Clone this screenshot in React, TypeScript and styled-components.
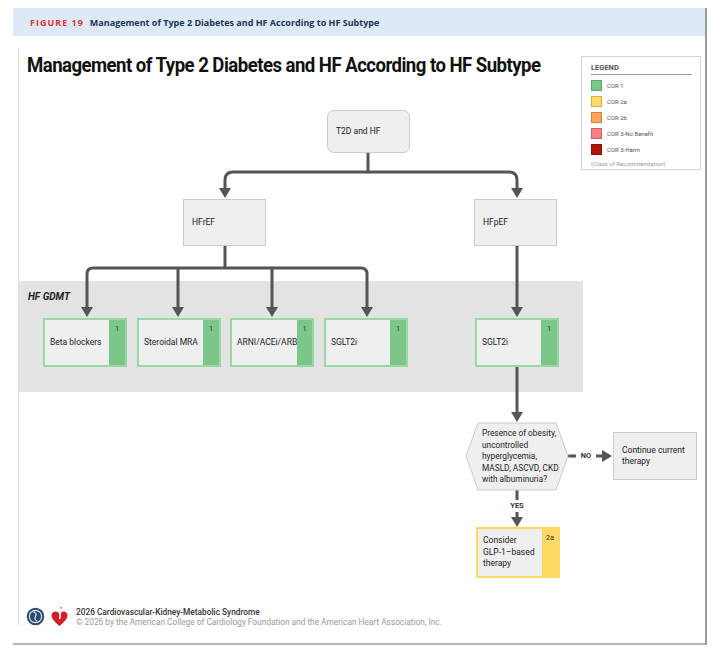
import React from "react";
import styled, { createGlobalStyle } from "styled-components";

const Global = createGlobalStyle`
  body { margin: 0; background: #fff; font-family: Roboto, "Liberation Sans", sans-serif; }
`;

const OX = 13;
const OY = 36;

const Frame = styled.div`
  margin: 8px 0 0 13px;
  width: 692px;
  border-right: 2px solid #9a9a9a;
`;
const Banner = styled.div`
  height: 28px;
  background: #dde9f6;
  display: flex;
  align-items: center;
  gap: 6px;
  padding-left: 17px;
  font-family: "Open Sans", sans-serif;
  font-size: 9px;
  font-weight: 700;
  color: #1d3557;
`;
const Fig = styled.span`
  color: #e03131;
  letter-spacing: 1px;
`;
const Body = styled.div`
  position: relative;
  height: 607px;
  border-bottom: 2px solid #b5b5b5;
  display: flex;
  flex-direction: column;
  &::before {
    content: "";
    position: absolute;
    left: 5px;
    top: 12px;
    height: 577px;
    border-left: 1px solid #dcdcdc;
  }
`;
const Title = styled.h1`
  margin: 17px 0 0 14px;
  font-family: Roboto, sans-serif;
  font-weight: 700;
  font-size: 21px;
  letter-spacing: -0.6px;
  color: #111;
  transform: scaleX(0.885);
  transform-origin: left;
`;
const Abs = styled.div<{ $x: number; $y: number; $w: number; $h: number }>`
  position: absolute;
  left: ${(p) => p.$x - OX}px;
  top: ${(p) => p.$y - OY}px;
  width: ${(p) => p.$w}px;
  height: ${(p) => p.$h}px;
  box-sizing: border-box;
`;
const Band = styled(Abs)`
  background: #e3e3e4;
`;
const BandLabel = styled(Abs)`
  font-size: 10px;
  font-weight: 700;
  font-style: italic;
  color: #222;
`;
const Node = styled(Abs)<{ $round?: boolean }>`
  background: #efefef;
  border: 1px solid #cbcbcb;
  border-radius: ${(p) => (p.$round ? "7px" : "0")};
  display: flex;
  align-items: center;
  padding-left: 8px;
  font-size: 8.5px;
  color: #222;
  line-height: 1.35;
`;
const CorNode = styled(Abs)<{ $c: string; $b: string }>`
  background: #efefef;
  border: 2px solid ${(p) => p.$b};
  display: flex;
  font-size: 8.5px;
  color: #222;
  line-height: 1.35;
`;
const CorText = styled.div`
  flex: 1;
  display: flex;
  align-items: center;
  padding-left: 5px;
`;
const CorStrip = styled.div<{ $c: string }>`
  width: 16px;
  background: ${(p) => p.$c};
  font-size: 7.5px;
  text-align: center;
  padding-top: 4px;
  color: #333;
`;
const HexText = styled(Abs)`
  font-size: 8.3px;
  line-height: 1.38;
  color: #222;
  display: flex;
  align-items: center;
`;
const Label = styled(Abs)`
  font-size: 7.5px;
  font-weight: 700;
  color: #333;
  text-align: center;
`;
const Legend = styled(Abs)`
  border: 1px solid #d5d5d5;
  background: #fff;
  padding: 6px 8px 0 9px;
  display: flex;
  flex-direction: column;
  gap: 5px;
`;
const LegendHead = styled.div`
  font-size: 7.5px;
  font-weight: 700;
  color: #555;
  border-bottom: 1px solid #999;
  padding-bottom: 2px;
  margin-bottom: 0;
`;
const LegendRow = styled.div`
  display: flex;
  align-items: center;
  gap: 5px;
  font-size: 6px;
  color: #555;
`;
const Swatch = styled.span<{ $c: string; $b: string }>`
  width: 11px;
  height: 11px;
  background: ${(p) => p.$c};
  border: 1px solid ${(p) => p.$b};
  box-sizing: border-box;
`;
const LegendNote = styled.div`
  font-size: 6px;
  color: #999;
`;
const Lines = styled.svg`
  position: absolute;
  left: 0;
  top: 0;
`;
const Footer = styled.div`
  margin-top: auto;
  display: flex;
  align-items: center;
  gap: 6px;
  padding: 0 0 16px 13px;
`;
const FootText = styled.div`
  display: flex;
  flex-direction: column;
  margin-left: 2px;
`;
const FootTitle = styled.div`
  font-size: 8.3px;
  font-weight: 500;
  color: #333;
`;
const FootCopy = styled.div`
  font-size: 8.3px;
  color: #999;
`;

const G = "#555";
const Arrow = ({ x, y }: { x: number; y: number }) => (
  <polygon points={`${x - 6},${y - 10} ${x + 6},${y - 10} ${x},${y}`} fill={G} />
);
const ArrowR = ({ x, y }: { x: number; y: number }) => (
  <polygon points={`${x - 10},${y - 6} ${x - 10},${y + 6} ${x},${y}`} fill={G} />
);

const green = { c: "#7dc68a", b: "#9ad7a4" };
const yellow = { c: "#ffd966", b: "#ffd966" };

const cor = [
  { x: 43, t: "Beta blockers" },
  { x: 137, t: "Steroidal MRA" },
  { x: 230, t: "ARNI/ACEi/ARB" },
  { x: 324, t: "SGLT2i" },
  { x: 475, t: "SGLT2i" },
];

export default function App() {
  return (
    <>
      <Global />
      <Frame>
        <Banner>
          <Fig>FIGURE 19</Fig>
          <span>Management of Type 2 Diabetes and HF According to HF Subtype</span>
        </Banner>
        <Body>
          <Title>Management of Type 2 Diabetes and HF According to HF Subtype</Title>
          <Band $x={18} $y={281} $w={565} $h={111} />
          <BandLabel $x={28} $y={291} $w={80} $h={14}>HF GDMT</BandLabel>
          <Lines width={692} height={607} viewBox={`${OX} ${OY} 692 607`}>
            <g stroke={G} strokeWidth={3} fill="none">
              <path d="M368 153 V172" />
              <path d="M225 189 V180 Q225 172 233 172 H509 Q517 172 517 180 V189" />
              <path d="M225 246 V268" />
              <path d="M87 308 V274 Q87 268 93 268 H361 Q367 268 367 274 V308" />
              <path d="M178 268 V308 M272 268 V308" />
              <path d="M517 246 V308" />
              <path d="M517 366 V412" />
              <path d="M568 456 H576 M596 456 H602" />
              <path d="M517 490 V500 M517 512 V518" />
            </g>
            <Arrow x={225} y={198} />
            <Arrow x={517} y={198} />
            {[87, 178, 272, 367, 517].map((x) => (
              <Arrow key={x} x={x} y={317} />
            ))}
            <Arrow x={517} y={422} />
            <ArrowR x={612} y={456} />
            <Arrow x={517} y={527} />
            <polygon
              points="478,423 556,423 568,456 556,490 478,490 466,456"
              fill="#efefef"
              stroke="#cbcbcb"
              strokeWidth={1}
            />
          </Lines>
          <Node $x={327} $y={110} $w={83} $h={43} $round>T2D and HF</Node>
          <Node $x={183} $y={199} $w={83} $h={47}>HFrEF</Node>
          <Node $x={474} $y={199} $w={83} $h={47}>HFpEF</Node>
          {cor.map((n, i) => (
            <CorNode key={i} $x={n.x} $y={318} $w={84} $h={49} $c={green.c} $b={green.b}>
              <CorText>{n.t}</CorText>
              <CorStrip $c={green.c}>1</CorStrip>
            </CorNode>
          ))}
          <HexText $x={482} $y={425} $w={80} $h={64}>
            Presence of obesity, uncontrolled hyperglycemia, MASLD, ASCVD, CKD with albuminuria?
          </HexText>
          <Label $x={574} $y={451} $w={24} $h={10}>NO</Label>
          <Label $x={505} $y={501} $w={24} $h={10}>YES</Label>
          <Node $x={613} $y={432} $w={84} $h={48}>
            <span>Continue current<br />therapy</span>
          </Node>
          <CorNode $x={476} $y={527} $w={84} $h={51} $c={yellow.c} $b={yellow.b}>
            <CorText>Consider<br />GLP-1–based<br />therapy</CorText>
            <CorStrip $c={yellow.c}>2a</CorStrip>
          </CorNode>
          <Legend $x={581} $y={56} $w={120} $h={114}>
            <LegendHead>LEGEND</LegendHead>
            <LegendRow><Swatch $c="#7dc68a" $b="#5aa86a" />COR 1</LegendRow>
            <LegendRow><Swatch $c="#ffd966" $b="#d4b040" />COR 2a</LegendRow>
            <LegendRow><Swatch $c="#f9a65a" $b="#d08040" />COR 2b</LegendRow>
            <LegendRow><Swatch $c="#f98080" $b="#d06060" />COR 3-No Benefit</LegendRow>
            <LegendRow><Swatch $c="#b0150a" $b="#8a1008" />COR 3-Harm</LegendRow>
            <LegendNote>(Class of Recommendation)</LegendNote>
          </Legend>
          <Footer>
            <svg width="19" height="19" viewBox="0 0 20 20">
              <circle cx="10" cy="10" r="9.2" fill="#2b4a6b" />
              <circle cx="10" cy="10" r="7" fill="#e8eef4" />
              <circle cx="10" cy="10" r="5.8" fill="#2b4a6b" />
              <path d="M8 5 Q12 7 10 10 Q8 13 12 15" stroke="#e8eef4" strokeWidth="1.3" fill="none" />
            </svg>
            <svg width="17" height="21" viewBox="0 0 17 21">
              <path d="M8.5 20 C4 16 0.5 13 0.5 9.5 C0.5 7 2.5 5.5 4.5 5.5 C6.5 5.5 7.8 6.8 8.5 8 C9.2 6.8 10.5 5.5 12.5 5.5 C14.5 5.5 16.5 7 16.5 9.5 C16.5 13 13 16 8.5 20 Z" fill="#d21f26" />
              <path d="M9 2 L11.5 0.5 L10.5 4 L9.5 13 L8 13 L8.5 4 Z" fill="#fff" />
              <path d="M9.3 1.5 L10.8 0.8 L10 3.5 Z" fill="#d21f26" />
            </svg>
            <FootText>
              <FootTitle>2026 Cardiovascular-Kidney-Metabolic Syndrome</FootTitle>
              <FootCopy>© 2026 by the American College of Cardiology Foundation and the American Heart Association, Inc.</FootCopy>
            </FootText>
          </Footer>
        </Body>
      </Frame>
    </>
  );
}
